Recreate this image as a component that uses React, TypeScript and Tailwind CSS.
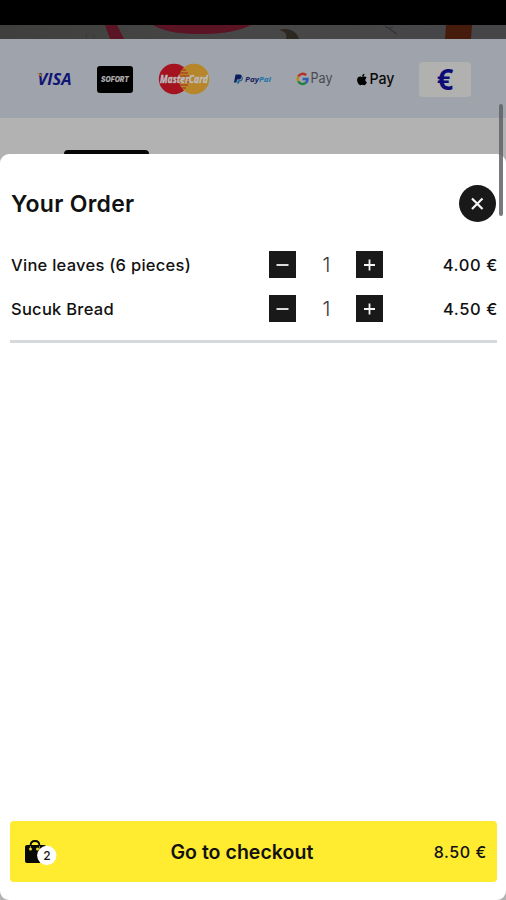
import { useState } from "react";
import { FaApple } from "react-icons/fa";

function HeroStrip() {
  return (
    <svg className="block h-[14px] w-full" viewBox="0 0 506 14" preserveAspectRatio="none">
      <defs>
        <linearGradient id="strip" x1="0" x2="1" y1="0" y2="0">
          <stop offset="0" stopColor="#3f3f3e" />
          <stop offset="0.5" stopColor="#484747" />
          <stop offset="1" stopColor="#454548" />
        </linearGradient>
      </defs>
      <rect width="506" height="14" fill="url(#strip)" />
      <path d="M86 8l1 6M93 9l2 5" stroke="#393939" strokeWidth="1" />
      <path d="M105 0h12l7 14h-14Z" fill="#5a1424" />
      <path d="M153 0h98c-16 8-34 9-52 9s-34-2-46-9Z" fill="#5a1424" />
      <path d="M279 5c9-3 18 1 20 9h-13c2-5-2-8-7-9Z" fill="#2d2721" />
      <path d="M385 1l12 8M389 3l4-1" stroke="#333335" strokeWidth="1.200" />
      <path d="M446 0h26l-1 14h-26Z" fill="#451b0c" />
    </svg>
  );
}

function PaymentLogos() {
  return (
    <div className="flex h-[79px] items-center bg-[#9fa3ab] pt-[1px] pl-[36px] pr-[35px]">
      <svg className="h-[20px] w-[36px] shrink-0 overflow-visible" viewBox="0 0 36 20" role="img" aria-label="Visa">
        <text x="1.500" y="16" textLength="34" lengthAdjust="spacingAndGlyphs" fill="#101575" className="font-['Open_Sans',sans-serif] text-[15.500px] font-bold italic">VISA</text>
        <path d="M0 4.500h4.500l2 5C5 7 3 5.500 0 4.500Z" fill="#c27e22" />
      </svg>
      <div className="ml-[25px] flex h-[27px] w-[36px] shrink-0 items-center justify-center rounded-[3px] bg-black">
        <svg className="h-[14px] w-[32px] overflow-visible" viewBox="0 0 32 14" role="img" aria-label="Sofort">
          <text x="2" y="9.500" textLength="28" lengthAdjust="spacingAndGlyphs" fill="#aaaaac" className="font-['Inter',sans-serif] text-[7.500px] font-black italic">SOFORT</text>
        </svg>
      </div>
      <svg className="ml-[25px] h-[32px] w-[52px] shrink-0 overflow-visible" viewBox="0 0 52 32" role="img" aria-label="MasterCard">
        <circle cx="16" cy="16" r="15.200" fill="#a4131f" />
        <circle cx="36" cy="16" r="15.200" fill="#b7862b" />
        <path d="M24 7h4M22 10h8M21 13h10M21 16h10M21 19h10M22 22h8M24 25h4" stroke="#a94723" strokeWidth="1.400" />
        <text x="2" y="20" textLength="48" lengthAdjust="spacingAndGlyphs" fill="#bcbcbe" stroke="#bcbcbe" strokeWidth="0.400" className="font-['Open_Sans',sans-serif] text-[10.500px] font-bold italic">MasterCard</text>
      </svg>
      <svg className="ml-[24px] h-[12px] w-[38px] shrink-0 overflow-visible" viewBox="0 0 38 12" role="img" aria-label="PayPal">
        <path d="M1.500 1.500h4c2 0 2.600 1.200 2 3-.5 1.500-1.600 2-3.300 2H3L2.400 9.500H0Z" fill="#0c1d5c" />
        <path d="M7.800 3c1 2-.5 4.300-3 4.300H3.700L3 10.500h2l.5-2c2 0 3-1 3.300-2.500.2-1.300 0-2.300-1-3Z" fill="#176991" />
        <text x="11" y="9" textLength="26" lengthAdjust="spacingAndGlyphs" fill="#17245f" className="font-['Open_Sans',sans-serif] text-[7px] font-bold italic">
          Pay<tspan fill="#1a75a8">Pal</tspan>
        </text>
      </svg>
      <svg className="ml-[24px] h-[20px] w-[38px] shrink-0 overflow-visible" viewBox="0 0 38 20" role="img" aria-label="Google Pay">
        <g fill="none" strokeWidth="2.400">
          <path d="M10.200 6.200A5 5 0 0 0 2.200 7.600" stroke="#b92e24" />
          <path d="M2.200 7.600A5 5 0 0 0 2.200 12.200" stroke="#bc8a14" />
          <path d="M2.200 12.200A5 5 0 0 0 9.800 13.800" stroke="#228340" />
          <path d="M9.800 13.800A5 5 0 0 0 11.500 10H6.600" stroke="#2d5cb0" />
        </g>
        <text x="14.500" y="14" textLength="22" lengthAdjust="spacingAndGlyphs" fill="#484b50" className="font-['Inter',sans-serif] text-[14px]">Pay</text>
      </svg>
      <div className="ml-[23px] flex h-[22px] w-[40px] shrink-0 items-center">
        <FaApple className="h-[13px] w-[10px] shrink-0 text-black" preserveAspectRatio="none" />
        <svg className="ml-[2px] h-[22px] w-[26px] overflow-visible" viewBox="0 0 26 22" role="img" aria-label="Apple Pay">
          <text x="0.500" y="15.500" textLength="25" lengthAdjust="spacingAndGlyphs" fill="#090909" className="font-['Inter',sans-serif] text-[15px] font-medium">Pay</text>
        </svg>
      </div>
      <div className="ml-auto flex h-[35px] w-[52px] shrink-0 items-center justify-center rounded-[4px] bg-[#b1b1b0] pb-[2px]">
        <span className="font-['Open_Sans',sans-serif] text-[29px] leading-none font-bold text-[#0b0c76]">€</span>
      </div>
    </div>
  );
}

type StepButtonProps = { kind: "minus" | "plus"; onClick: () => void };

function StepButton({ kind, onClick }: StepButtonProps) {
  return (
    <button onClick={onClick} aria-label={kind} className="flex size-[27px] items-center justify-center bg-[#191919]">
      <svg className="size-[27px]" viewBox="0 0 27 27" stroke="#f4f4f4" strokeWidth="1.800" fill="none">
        <path d={kind === "minus" ? "M7.500 14h12" : "M8 14h11M13.500 8.500v11"} />
      </svg>
    </button>
  );
}

const initialItems = [
  { name: "Vine leaves (6 pieces)", price: 4, count: 1 },
  { name: "Sucuk Bread", price: 4.5, count: 1 },
];

export default function App() {
  const [items, setItems] = useState(initialItems);
  const change = (index: number, delta: number) =>
    setItems(items.map((item, i) => (i === index ? { ...item, count: Math.max(0, item.count + delta) } : item)));
  const total = items.reduce((sum, item) => sum + item.price * item.count, 0);
  const quantity = items.reduce((sum, item) => sum + item.count, 0);

  return (
    <div className="relative flex h-[900px] w-[506px] flex-col overflow-hidden bg-[#b2b2b2] font-['Inter','Liberation_Sans',sans-serif] text-[#111]">
      <div className="h-[25px] shrink-0 bg-black" />
      <HeroStrip />
      <PaymentLogos />
      <div className="flex h-[36px] shrink-0 items-end pl-[64px]">
        <div className="h-[4px] w-[85px] rounded-t-[6px] bg-[#060606]" />
      </div>
      <main className="flex min-h-0 flex-1 flex-col rounded-[9px] bg-white pl-[10px] pr-[9px]">
        <header className="flex h-[98px] shrink-0 items-center justify-between pr-[1px]">
          <h1 className="pt-[2px] pl-[1px] text-[23px] font-semibold tracking-[0.300px]">Your Order</h1>
          <button aria-label="Close" className="flex size-[37px] items-center justify-center rounded-full bg-[#191919]">
            <svg className="size-[37px]" viewBox="0 0 37 37" stroke="#f7f7f7" strokeWidth="2.200" fill="none">
              <path d="M13 13.500l10.500 10.500M23.500 13.500l-10.500 10.500" />
            </svg>
          </button>
        </header>
        <ul className="-mt-[10px] flex shrink-0 flex-col">
          {items.map((item, i) => (
            <li key={item.name} className="flex h-[44px] items-center">
              <span className="w-[259px] pt-[2px] pl-[1px] text-[16.500px] font-medium tracking-[0.260px] whitespace-nowrap">{item.name}</span>
              <StepButton kind="minus" onClick={() => change(i, -1)} />
              <span className="w-[60px] pt-[1px] pl-[1px] text-center text-[20px] font-light text-[#333]">{item.count}</span>
              <StepButton kind="plus" onClick={() => change(i, 1)} />
              <span className="-mr-[1px] ml-auto pt-[2px] text-[16.500px] font-medium tracking-[0.600px] whitespace-nowrap">{item.price.toFixed(2)} €</span>
            </li>
          ))}
        </ul>
        <hr className="mt-[10px] h-[3px] shrink-0 border-0 bg-[#d6d9dc]" />
        <button className="mt-auto mb-[18px] flex h-[61px] shrink-0 items-center justify-between rounded-[4px] bg-[#ffeb2f] pr-[10px] pl-[14px]">
          <svg className="h-[28px] w-[34px]" viewBox="0 0 34 28" aria-hidden="true">
            <path d="M3 7h17q2 0 2 2v16H3q-2 0-2-2V9q0-2 2-2Z" fill="#080804" />
            <path d="M6.500 8q0-5 4.500-5t4.500 5" stroke="#080804" strokeWidth="1.800" fill="none" />
            <path d="M6.500 8v4M15.500 8v4" stroke="#8b801c" strokeWidth="1" />
            <circle cx="6.500" cy="11" r="1.500" fill="#e9d72b" />
            <circle cx="13.500" cy="11" r="1.500" fill="#e9d72b" />
            <circle cx="22.800" cy="17.500" r="9.700" fill="white" />
            <text x="23" y="22" textAnchor="middle" fill="#171717" className="text-[12px] font-medium">{quantity}</text>
          </svg>
          <span className="pt-[2px] pr-[8px] text-center text-[19.500px] font-semibold tracking-[0.040px] whitespace-nowrap">Go to checkout</span>
          <span className="pt-[1px] text-right text-[16px] font-medium tracking-[0.600px] whitespace-nowrap">{total.toFixed(2)} €</span>
        </button>
      </main>
      <div className="absolute top-[104px] right-[3px] h-[112px] w-[4px] rounded-full bg-[#606165]/85" />
    </div>
  );
}
